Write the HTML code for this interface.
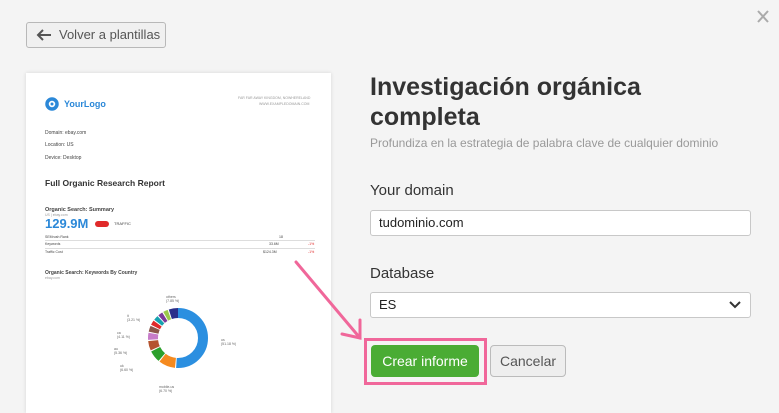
<!DOCTYPE html>
<html><head><meta charset="utf-8"><style>
*{margin:0;padding:0;box-sizing:border-box}
body{width:779px;height:404px;background:#f4f4f4;font-family:"Liberation Sans",sans-serif;position:relative;overflow:hidden;color:#333}
.a{position:absolute}
.back{left:26px;top:22px;width:140px;height:26px;border:1px solid #b8b8b8;border-radius:3px;background:#f0f0f0;font-size:13px;color:#555;line-height:24px;padding-left:32px}
.card{left:26px;top:73px;width:305px;height:340px;background:#fff;box-shadow:0 0 4px rgba(0,0,0,.12)}
.t{position:absolute;font-size:5px;color:#444}
h1{position:absolute;left:370px;top:72px;font-size:25px;line-height:30px;font-weight:bold;color:#333}
.sub{left:370px;top:136px;font-size:12px;color:#999}
.lbl{font-size:15px;color:#333}
.inp{left:370px;width:381px;height:26px;border:1px solid #c8c8c8;border-radius:3px;background:#fff;font-size:13px;line-height:24px;padding-left:8px;color:#222}
</style></head><body>
<div class="a back"><svg class="a" style="left:9px;top:5px" width="16" height="14" viewBox="0 0 16 14"><path d="M15 7H2M7 2L2 7l5 5" stroke="#555" stroke-width="2" fill="none"/></svg>Volver a plantillas</div>
<svg class="a" style="left:757px;top:10px" width="12" height="13" viewBox="0 0 12 13"><path d="M1 1l10 11M11 1L1 12" stroke="#aaa" stroke-width="2"/></svg>
<div class="a card">
<svg class="a" style="left:19px;top:24px" width="14" height="14" viewBox="0 0 14 14"><circle cx="7" cy="7" r="5" stroke="#2b88d8" stroke-width="3.5" fill="none"/><circle cx="7" cy="7" r="1.5" fill="#2b88d8"/></svg>
<div class="t" style="left:38px;top:26px;font-size:9px;font-weight:bold;color:#2b88d8">YourLogo</div>
<div class="t" style="left:212px;top:23px;font-size:3.5px;color:#999">FAR FAR AWAY KINGDOM, NOWHERELAND</div>
<div class="t" style="left:233px;top:29px;font-size:3.5px;color:#999">WWW.EXAMPLEDOMAIN.COM</div>
<div class="t" style="left:19px;top:57px">Domain: ebay.com</div>
<div class="t" style="left:19px;top:69px">Location: US</div>
<div class="t" style="left:19px;top:82px">Device: Desktop</div>
<div class="t" style="left:19px;top:105px;font-size:8.5px;font-weight:bold;color:#333">Full Organic Research Report</div>
<div class="t" style="left:19px;top:134px;font-size:5.5px;font-weight:bold">Organic Search: Summary</div>
<div class="t" style="left:19px;top:140px;font-size:3.5px;color:#999">US | ebay.com</div>
<div class="t" style="left:19px;top:143px;font-size:13px;font-weight:bold;color:#2b88d8">129.9M</div>
<div class="a" style="left:69px;top:148px;width:14px;height:6px;background:#e02a2a;border-radius:3px"></div>
<div class="t" style="left:88px;top:148px;font-size:4px">TRAFFIC</div>
<div class="t" style="left:19px;top:162px;font-size:3.5px">SEMrush Rank</div><div class="t" style="left:253px;top:162px;font-size:3.5px">18</div>
<div class="a" style="left:19px;top:167px;width:270px;height:1px;background:#ddd"></div>
<div class="t" style="left:19px;top:169px;font-size:3.5px">Keywords</div><div class="t" style="left:243px;top:169px;font-size:3.5px">33.6M</div><div class="t" style="left:282px;top:169px;font-size:3.5px;color:#e02a2a">-1%</div>
<div class="a" style="left:19px;top:175px;width:270px;height:1px;background:#ddd"></div>
<div class="t" style="left:19px;top:177px;font-size:3.5px">Traffic Cost</div><div class="t" style="left:237px;top:177px;font-size:3.5px">$124.3M</div><div class="t" style="left:282px;top:177px;font-size:3.5px;color:#e02a2a">-1%</div>
<div class="t" style="left:19px;top:197px;font-size:5px;font-weight:bold">Organic Search: Keywords By Country</div>
<div class="t" style="left:19px;top:203px;font-size:3.5px;color:#999">ebay.com</div>
<svg class="a" style="left:100px;top:220px" width="100" height="90" viewBox="0 0 100 90">
<g fill="none" stroke-width="10">
<circle cx="52" cy="45" r="25" stroke="#2b8fe0" stroke-dasharray="80 200" transform="rotate(-90 52 45)"/>
<circle cx="52" cy="45" r="25" stroke="#f58a1f" stroke-dasharray="14 200" stroke-dashoffset="-81" transform="rotate(-90 52 45)"/>
<circle cx="52" cy="45" r="25" stroke="#2ca02c" stroke-dasharray="10 200" stroke-dashoffset="-96" transform="rotate(-90 52 45)"/>
<circle cx="52" cy="45" r="25" stroke="#b5532e" stroke-dasharray="8 200" stroke-dashoffset="-107" transform="rotate(-90 52 45)"/>
<circle cx="52" cy="45" r="25" stroke="#c77cc9" stroke-dasharray="6 200" stroke-dashoffset="-116" transform="rotate(-90 52 45)"/>
<circle cx="52" cy="45" r="25" stroke="#8c564b" stroke-dasharray="5 200" stroke-dashoffset="-123" transform="rotate(-90 52 45)"/>
<circle cx="52" cy="45" r="25" stroke="#e02a2a" stroke-dasharray="4 200" stroke-dashoffset="-129" transform="rotate(-90 52 45)"/>
<circle cx="52" cy="45" r="25" stroke="#17a2b0" stroke-dasharray="4 200" stroke-dashoffset="-134" transform="rotate(-90 52 45)"/>
<circle cx="52" cy="45" r="25" stroke="#7b3a9a" stroke-dasharray="4 200" stroke-dashoffset="-139" transform="rotate(-90 52 45)"/>
<circle cx="52" cy="45" r="25" stroke="#9bc94a" stroke-dasharray="4 200" stroke-dashoffset="-144" transform="rotate(-90 52 45)"/>
<circle cx="52" cy="45" r="25" stroke="#2a2f8a" stroke-dasharray="8 200" stroke-dashoffset="-149" transform="rotate(-90 52 45)"/>
</g></svg>
<div class="t" style="left:195px;top:265px;font-size:3.5px;color:#666">us<br>(51.18 %)</div>
<div class="t" style="left:140px;top:222px;font-size:3.5px;color:#666">others<br>(7.85 %)</div>
<div class="t" style="left:133px;top:312px;font-size:3.5px;color:#666">mobile-us<br>(6.70 %)</div>
<div class="t" style="left:94px;top:291px;font-size:3.5px;color:#666">uk<br>(6.60 %)</div>
<div class="t" style="left:88px;top:274px;font-size:3.5px;color:#666">au<br>(5.36 %)</div>
<div class="t" style="left:91px;top:258px;font-size:3.5px;color:#666">ca<br>(4.11 %)</div>
<div class="t" style="left:101px;top:241px;font-size:3.5px;color:#666">it<br>(3.21 %)</div>
</div>
<h1>Investigación orgánica<br>completa</h1>
<div class="a sub">Profundiza en la estrategia de palabra clave de cualquier dominio</div>
<div class="a lbl" style="left:370px;top:182px">Your domain</div>
<div class="a inp" style="top:210px">tudominio.com</div>
<div class="a lbl" style="left:370px;top:265px">Database</div>
<div class="a inp" style="top:292px">ES<svg class="a" style="left:358px;top:8px" width="12" height="8" viewBox="0 0 12 8"><path d="M1 1l5 5 5-5" stroke="#333" stroke-width="2" fill="none"/></svg></div>
<svg class="a" style="left:0;top:0" width="779" height="404"><path d="M296 262L360 338M342 334l18 4 0-18" stroke="#f0679a" stroke-width="3" fill="none" stroke-linecap="round"/></svg>
<div class="a" style="left:364px;top:338px;width:123px;height:47px;border:3px solid #f0679a"></div>
<div class="a" style="left:371px;top:345px;width:108px;height:32px;background:#4aac34;border-radius:4px;color:#fff;font-size:14px;line-height:32px;text-align:center">Crear informe</div>
<div class="a" style="left:490px;top:345px;width:76px;height:32px;background:#eee;border:1px solid #bbb;border-radius:4px;color:#555;font-size:14px;line-height:30px;text-align:center">Cancelar</div>
</body></html>
